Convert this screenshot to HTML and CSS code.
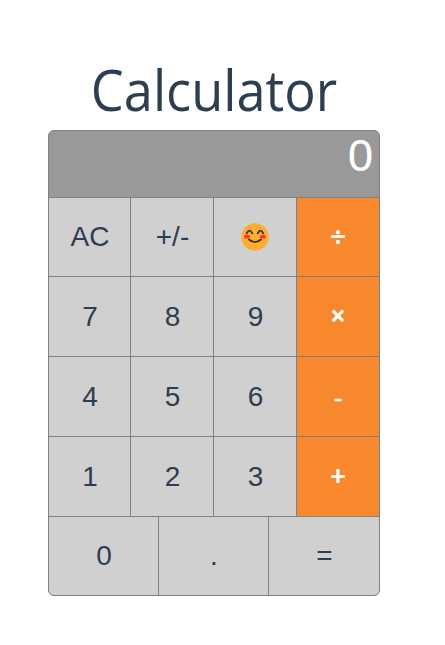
FILE: index.html
```html
<!DOCTYPE html>
<html lang="en">
<head>
<meta charset="utf-8">
<title>Calculator</title>
<link rel="stylesheet" href="styles.css">
</head>
<body>
<main class="app">
<h1 class="title">Calculator</h1>
<section class="calculator">
<div class="display">0</div>
<div class="row"><button>AC</button><button>+/-</button><button class="emoji" aria-label="Smile"><svg class="smile" viewBox="0 0 28 28"><circle cx="14" cy="14" r="13.7" fill="#ffad2f"/><ellipse cx="6" cy="13.7" rx="3" ry="1.9" fill="#ff3131"/><ellipse cx="22" cy="13.7" rx="3" ry="1.9" fill="#ff3131"/><g fill="none" stroke="#422b2c" stroke-width="1.8" stroke-linecap="round"><path d="M5.8 10.2q2.7-5 5.4 0M16.8 10.2q2.7-5 5.4 0M8 16.5q6 5.2 12 0"/></g></svg></button><button class="operator">÷</button></div>
<div class="row"><button>7</button><button>8</button><button>9</button><button class="operator">×</button></div>
<div class="row"><button>4</button><button>5</button><button>6</button><button class="operator minus">-</button></div>
<div class="row"><button>1</button><button>2</button><button>3</button><button class="operator">+</button></div>
<div class="row bottom"><button>0</button><button>.</button><button>=</button></div>
</section>
</main>
</body>
</html>
```

FILE: styles.css
```css
* { box-sizing: border-box; }
body { margin: 0; background: #fff; color: #2c3e50; }
.app { width: 332px; margin-left: 48px; padding-top: 50px; }
.title { margin: 0; height: 80px; font: 400 56px/79px "Open Sans", sans-serif; text-align: center; transform: scaleX(.935); }
.calculator { height: 466px; border: 1px solid #808080; border-radius: 6px; overflow: hidden; background: #808080; display: grid; grid-template-rows: 66px 78px repeat(3, 79px) 78px; row-gap: 1px; }
.display { background: #999; color: #fff; font: 45px/50px "Liberation Sans", sans-serif; text-align: right; padding-right: 6px; -webkit-text-stroke: .2px #fff; }
.row { display: grid; grid-template-columns: 81px repeat(3, 82px); column-gap: 1px; }
.bottom { grid-template-columns: 109px 109px 110px; }
button { min-width: 0; border: 0; padding: 0 0 0 1px; background: #d0d0d0; color: #2c3e50; font: 28px "Liberation Sans", sans-serif; display: flex; align-items: center; justify-content: center; }
.emoji { padding: 0; }
.operator { background: #f7882d; color: #fff; font: 700 28px "Open Sans", sans-serif; padding: 0 0 3px; }
.minus { font-weight: 400; padding-bottom: 2px; -webkit-text-stroke: .3px #fff; }
.smile { width: 28px; height: 28px; }
```
